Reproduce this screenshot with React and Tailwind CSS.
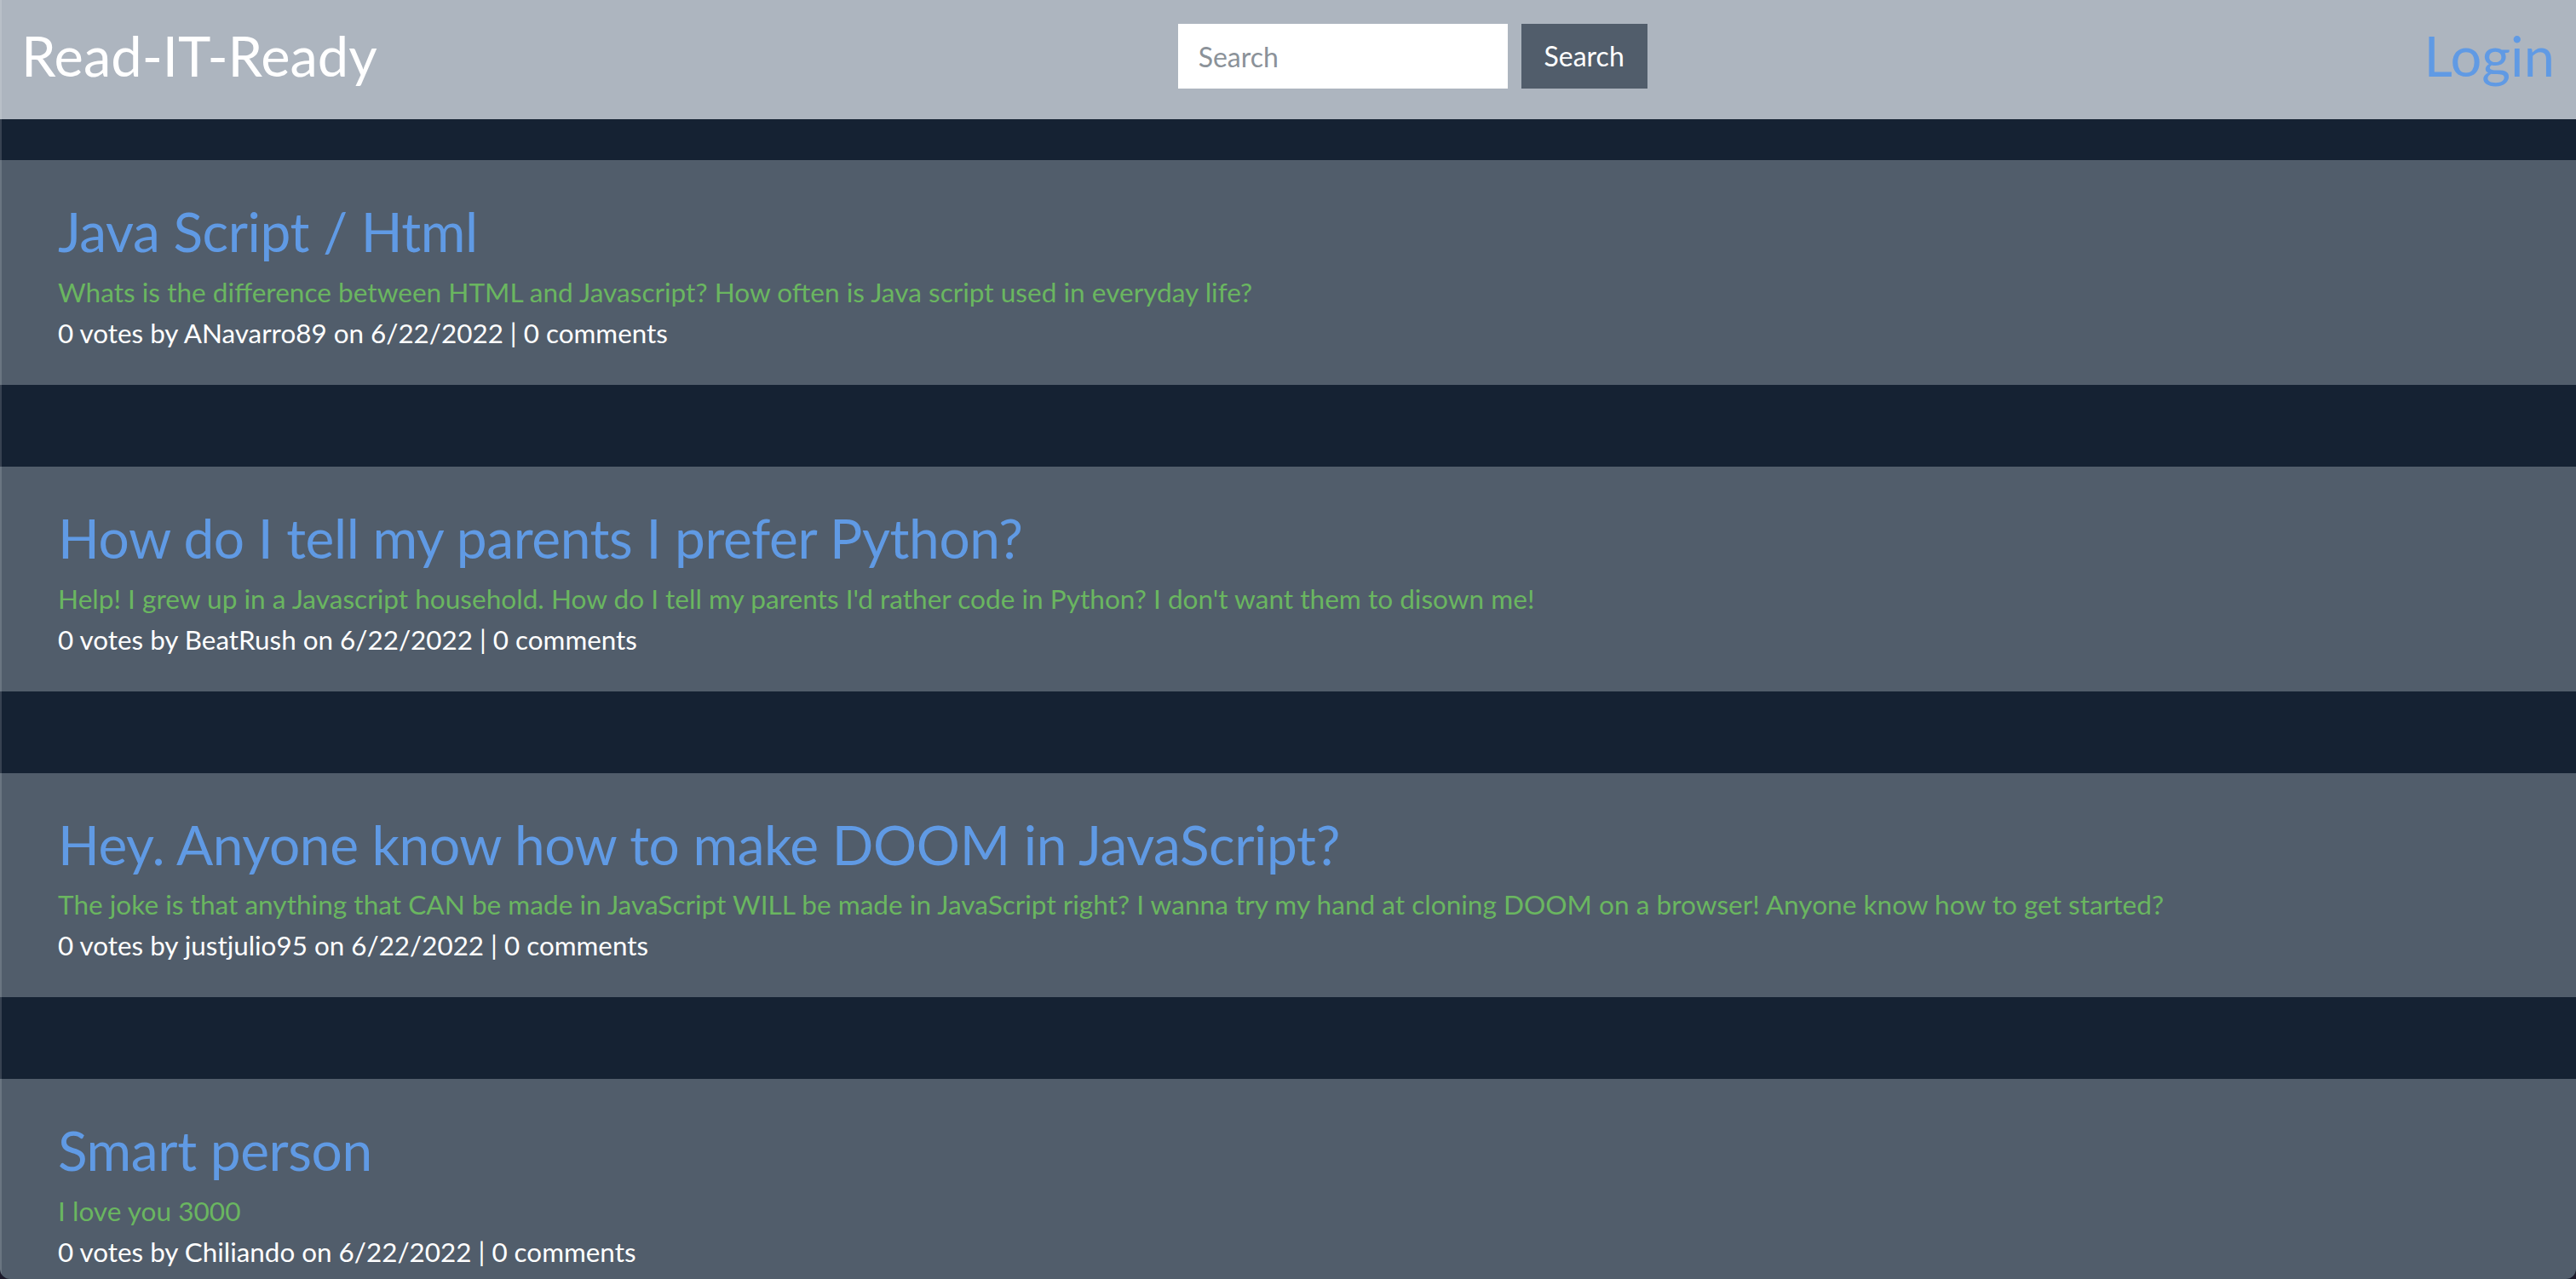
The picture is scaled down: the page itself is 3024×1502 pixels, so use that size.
import React from "react";

const posts = [
  {
    title: "Java Script / Html",
    body: "Whats is the difference between HTML and Javascript? How often is Java script used in everyday life?",
    user: "ANavarro89",
  },
  {
    title: "How do I tell my parents I prefer Python?",
    body: "Help! I grew up in a Javascript household. How do I tell my parents I'd rather code in Python? I don't want them to disown me!",
    user: "BeatRush",
  },
  {
    title: "Hey. Anyone know how to make DOOM in JavaScript?",
    body: "The joke is that anything that CAN be made in JavaScript WILL be made in JavaScript right? I wanna try my hand at cloning DOOM on a browser! Anyone know how to get started?",
    user: "justjulio95",
  },
  {
    title: "Smart person",
    body: "I love you 3000",
    user: "Chiliando",
  },
];

export default function App() {
  return (
    <div className="h-screen w-full overflow-hidden bg-[#1c1a2b] font-['Lato','Open_Sans',sans-serif]">
      <div className="relative h-full w-full overflow-hidden rounded-b-[12px] bg-[#152233]">
        <header className="flex h-[140px] items-start justify-between bg-[#adb5bf] px-[25px]">
          <a className="pt-[26px] text-[65px] leading-[1.2] text-white">Read-IT-Ready</a>
          <form className="ml-[28px] flex pt-[28px]" onSubmit={(e) => e.preventDefault()}>
            <input
              type="text"
              placeholder="Search"
              className="h-[76px] w-[387px] bg-white px-[24px] text-[32px] text-[#333] outline-none placeholder:text-[#8b9299]"
            />
            <button className="ml-[16px] h-[76px] w-[148px] bg-[#515d6b] text-[32px] text-white">
              Search
            </button>
          </form>
          <a className="pt-[26px] text-[65px] leading-[1.2] text-[#609ae4]">Login</a>
        </header>
        <main className="flex flex-col gap-[96px] pt-[48px]">
          {posts.map((p) => (
            <div key={p.title} className="bg-[#515d6b] px-[68px] pb-[37px] pt-[46px]">
              <h2 className="mb-[8px] text-[64px] leading-[1.2] tracking-[-0.4px] text-[#609ae4]">{p.title}</h2>
              <p className="text-[31.6px] leading-[48px] text-[#6ab660]">{p.body}</p>
              <p className="text-[31.4px] leading-[48px] text-white">
                0 votes by {p.user} on 6/22/2022 | 0 comments
              </p>
            </div>
          ))}
        </main>
        <div className="pointer-events-none absolute inset-y-0 left-0 w-[2px] bg-white/15" />
      </div>
    </div>
  );
}
